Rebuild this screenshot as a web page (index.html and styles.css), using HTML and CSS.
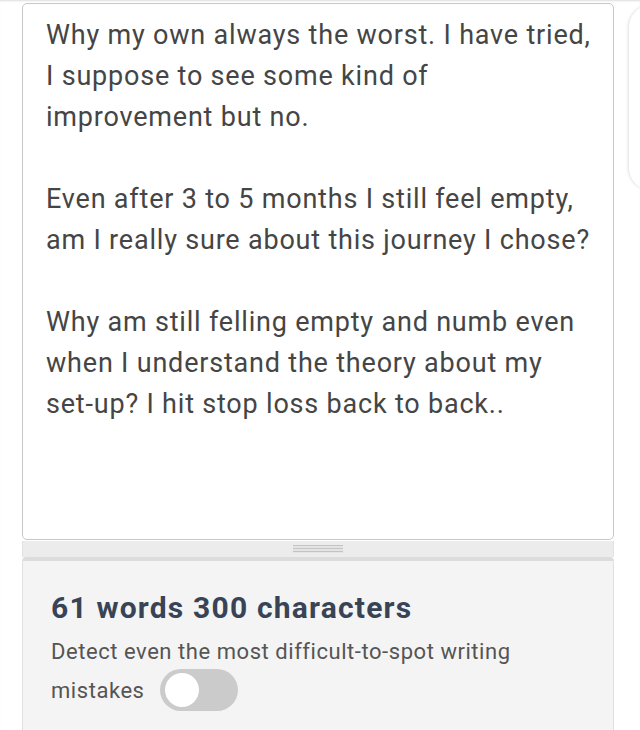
FILE: index.html
```html
<!DOCTYPE html>
<html>
<head>
<meta charset="utf-8">
<link rel="stylesheet" href="styles.css">
</head>
<body>
<div class="page">
  <div class="main">
    <div class="editor">
      <div class="text">Why my own always the worst. I have tried, I suppose to see some kind of improvement but no.

Even after 3 to 5 months I still feel empty, am I really sure about this journey I chose?

Why am still felling empty and numb even when I understand the theory about my set-up? I hit stop loss back to back..</div>
    </div>
    <div class="grip"><span class="grip-lines"></span></div>
    <div class="stats">
      <h2 class="count">61 words 300 characters</h2>
      <p class="detect">Detect even the most difficult-to-spot writing mistakes <span class="toggle"><span class="knob"></span></span></p>
    </div>
  </div>
  <div class="side"></div>
</div>
</body>
</html>
```
FILE: styles.css
```css
html, body {
  margin: 0;
  padding: 0;
  background: #fff;
  overflow: hidden;
}
body {
  width: 640px;
  height: 730px;
  font-family: Roboto, "Liberation Sans", sans-serif;
}
.page {
  display: flex;
  align-items: flex-start;
  padding-left: 22px;
  box-shadow: inset 0 2px 2px -1px #ddd;
  height: 730px;
  box-sizing: border-box;
  overflow: hidden;
}
.main {
  width: 592px;
  height: 730px;
  flex: none;
  display: flex;
  flex-direction: column;
}
.editor {
  margin-top: 3px;
  height: 537px;
  flex: none;
  box-sizing: border-box;
  border: 1px solid #c8c8c8;
  border-radius: 5px;
  background: #fff;
  padding: 11px 18px 0 23px;
}
.text {
  white-space: pre-wrap;
  font-size: 27px;
  letter-spacing: 0.8px;
  line-height: 41px;
  color: #454545;
}
.grip {
  height: 16px;
  flex: none;
  margin-top: 1px;
  background: #ececec;
  display: flex;
  justify-content: center;
  align-items: center;
  border-left: 1px solid #e2e2e2;
  border-right: 1px solid #e2e2e2;
}
.grip-lines {
  width: 50px;
  height: 8px;
  background: repeating-linear-gradient(to bottom, #c4c4c4 0, #c4c4c4 1px, #e4e4e4 1px, #e4e4e4 3px);
}
.stats {
  flex: 1;
  min-height: 0;
  box-sizing: border-box;
  border-top: 4px solid #dcdcdc;
  border-left: 1px solid #e0e0e0;
  border-right: 1px solid #e0e0e0;
  background: #f4f4f4;
  border-radius: 4px 4px 0 0;
  padding: 28px 20px 0 28px;
}
.count {
  margin: 0;
  font-size: 30px;
  line-height: 38px;
  font-weight: 700;
  color: #384456;
  letter-spacing: 1.2px;
}
.detect {
  margin: 5px 0 0;
  font-size: 22px;
  letter-spacing: 0.55px;
  line-height: 39px;
  color: #555;
}
.toggle {
  display: inline-block;
  vertical-align: middle;
  width: 78px;
  height: 42px;
  border-radius: 21px;
  background: #cbcbcb;
  position: relative;
  margin-left: 9px;
  margin-top: -4px;
}
.knob {
  position: absolute;
  left: 5px;
  top: 4px;
  width: 34px;
  height: 34px;
  border-radius: 50%;
  background: #fff;
}
.side {
  margin-left: 15px;
  margin-top: 5px;
  width: 40px;
  height: 185px;
  flex: none;
  border-radius: 22px 0 0 22px;
  box-shadow: -1px 0 3px rgba(0,0,0,0.12);
  background: #fff;
}
```
